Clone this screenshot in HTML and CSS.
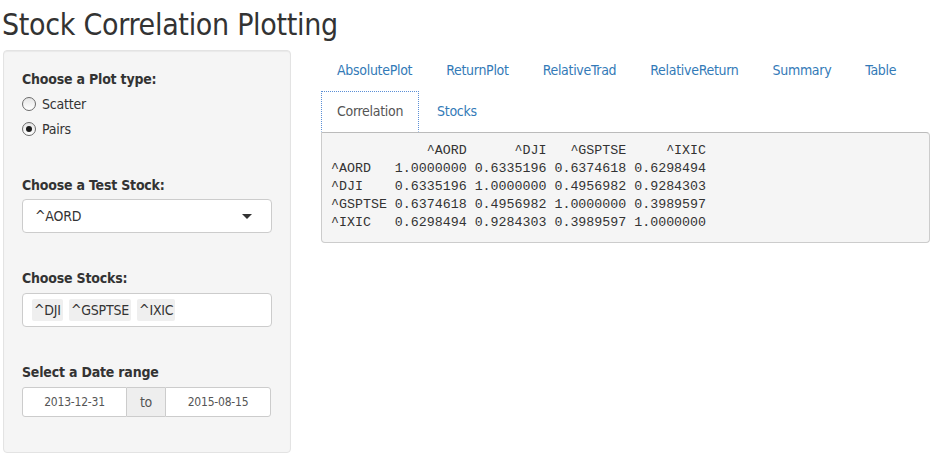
FILE: index.html
```html
<!DOCTYPE html>
<html>
<head>
<meta charset="utf-8">
<link rel="stylesheet" href="styles.css">
</head>
<body>
<h2 class="title">Stock Correlation Plotting</h2>
<div class="row">
  <div class="well">
    <div class="group g1">
      <div class="label">Choose a Plot type:</div>
      <div class="radio"><span class="rb"></span>Scatter</div>
      <div class="radio"><span class="rb on"></span>Pairs</div>
    </div>
    <div class="group">
      <div class="label">Choose a Test Stock:</div>
      <div class="select"><span>^AORD</span><span class="caret"></span></div>
    </div>
    <div class="group">
      <div class="label">Choose Stocks:</div>
      <div class="multi"><span class="chip">^DJI</span><span class="chip">^GSPTSE</span><span class="chip">^IXIC</span></div>
    </div>
    <div class="group last">
      <div class="label">Select a Date range</div>
      <div class="daterange">
        <div class="date left">2013-12-31</div>
        <div class="addon">to</div>
        <div class="date right">2015-08-15</div>
      </div>
    </div>
  </div>
  <div class="main">
    <ul class="tabs">
      <li><a>AbsolutePlot</a></li>
      <li><a>ReturnPlot</a></li>
      <li><a>RelativeTrad</a></li>
      <li><a>RelativeReturn</a></li>
      <li><a>Summary</a></li>
      <li><a>Table</a></li>
      <li class="brk"></li>
      <li class="active"><a>Correlation</a></li>
      <li><a>Stocks</a></li>
    </ul>
<pre class="out">            ^AORD      ^DJI   ^GSPTSE     ^IXIC
^AORD   1.0000000 0.6335196 0.6374618 0.6298494
^DJI    0.6335196 1.0000000 0.4956982 0.9284303
^GSPTSE 0.6374618 0.4956982 1.0000000 0.3989597
^IXIC   0.6298494 0.9284303 0.3989597 1.0000000</pre>
  </div>
</div>
</body>
</html>
```
FILE: styles.css
```css
html, body { margin: 0; padding: 0; background: #fff; }
body {
  font-family: "DejaVu Sans Condensed", "DejaVu Sans", sans-serif;
  font-size: 14px;
  color: #333;
  line-height: 20px;
  letter-spacing: -0.2px;
}
.title {
  font-weight: normal;
  font-size: 30px;
  line-height: 33px;
  margin: 8px 0 9px 2px;
  color: #333;
  letter-spacing: -0.3px;
}
.row { display: flex; align-items: flex-start; padding-left: 3px; gap: 30px; }
.well {
  width: 250px;
  background: #f5f5f5;
  border: 1px solid #e3e3e3;
  border-radius: 4px;
  padding: 18px 18px 35px 18px;
  box-shadow: inset 0 1px 1px rgba(0,0,0,0.05);
}
.group { margin-bottom: 35px; }
.group.g1 { margin-bottom: 36px; }
.group.last { margin-bottom: 0; }
.label { font-weight: bold; margin-bottom: 5px; height: 20px; }
.radio { display: flex; align-items: center; height: 20px; margin-bottom: 5px; }
.radio:last-child { margin-bottom: 0; }
.rb {
  width: 12px; height: 12px; border: 1px solid #6a6a6a; border-radius: 50%;
  background: linear-gradient(#e6e6e6, #fff); margin-right: 6px; position: relative;
  box-sizing: content-box;
}
.rb.on::after {
  content: ""; position: absolute; left: 3px; top: 3px; width: 6px; height: 6px;
  border-radius: 50%; background: #1a1a1a;
}
.select, .multi {
  height: 34px; box-sizing: border-box; background: #fff;
  border: 1px solid #ccc; border-radius: 4px;
  display: flex; align-items: center;
}
.select { padding: 0 12px; justify-content: space-between; margin-top: -1px; }
.caret {
  width: 0; height: 0; border-left: 5px solid transparent; border-right: 5px solid transparent;
  border-top: 5px solid #333; margin-right: 7px;
}
.multi { padding: 0 9px; }
.chip {
  background: #efefef; color: #333; padding: 0 2px; margin-right: 6px;
  line-height: 22px; border-radius: 2px;
}
.daterange { display: flex; height: 30px; font-size: 12px; color: #555; }
.date {
  background: #fff; border: 1px solid #ccc; text-align: center; line-height: 28px;
}
.date.left { width: 103px; border-radius: 3px 0 0 3px; }
.date.right { width: 104px; border-radius: 0 3px 3px 0; }
.addon {
  width: 38px; background: #eee; border-top: 1px solid #ccc; border-bottom: 1px solid #ccc;
  text-align: center; line-height: 28px; font-size: 14px;
}
.main { width: 609px; }
.tabs { list-style: none; margin: 0; padding: 0; display: flex; flex-wrap: wrap; }
.tabs li { margin-right: 2px; }
.tabs li.brk { flex-basis: 100%; height: 0; margin: 0; }
.tabs a {
  display: block; padding: 10px 15px; border: 1px solid transparent;
  border-radius: 4px 4px 0 0; color: #337ab7; line-height: 19px;
  letter-spacing: -0.3px;
}
.tabs li.active a {
  color: #555; border: 1px dotted #5b8fd6; border-bottom-color: transparent; border-radius: 0;
  background: #fff;
}
.out {
  margin: 0;
  background: #f5f5f5;
  border: 1px solid #ccc;
  border-top-color: #bbb;
  border-radius: 0 4px 4px 4px;
  padding: 9px 9px 10px 9px;
  font-family: "Liberation Mono", "Courier New", monospace;
  font-size: 13.3px;
  line-height: 18px;
  color: #333;
  letter-spacing: 0;
}
```
